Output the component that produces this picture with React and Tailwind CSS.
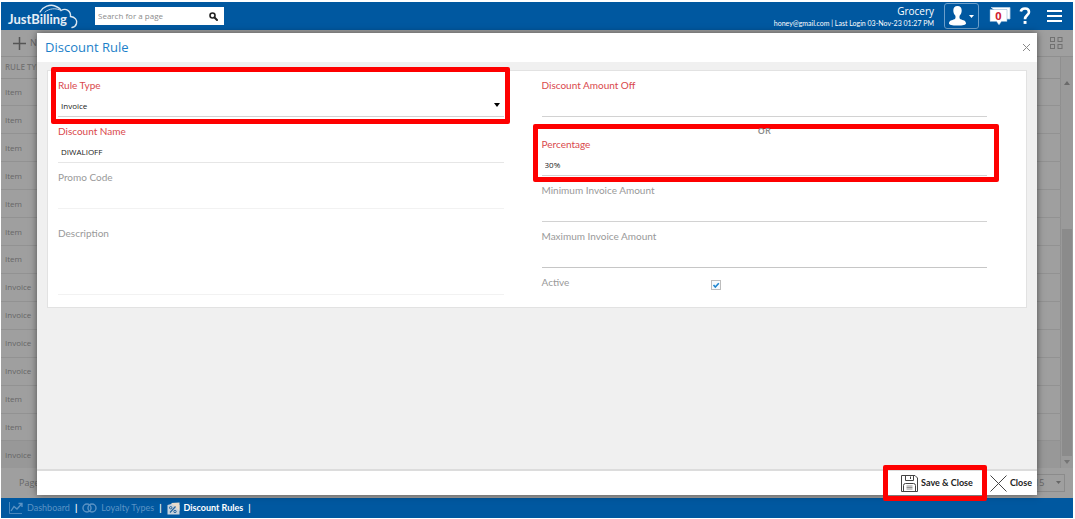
import React, { useState } from "react";

const ruleRows = [
  "Item", "Item", "Item", "Item", "Item", "Item", "Item",
  "Invoice", "Invoice", "Invoice", "Invoice",
  "Item", "Item", "Invoice",
];

function Logo() {
  return (
    <a href="#home" aria-label="JustBilling" className="block shrink-0">
      <svg width="72" height="26" viewBox="0 0 72 26" fill="none">
        <path
          d="M33 9C36 3.500 43 1 48 3C51 4 53 5.500 54 7.500C59 4.500 64 8 63.500 13.500C68 14 70.500 17 69.500 20.500C69 22.500 67.500 24 65 24.500"
          stroke="#dce8f2"
          strokeWidth="1.400"
          strokeLinecap="round"
        />
        <path d="M38 9C42 5.500 49 4.500 54 7.500" stroke="#b9d0e5" strokeWidth="1" strokeLinecap="round" />
        <text x="1" y="21" fill="#e6eef6" fontSize="13" fontWeight="700" fontFamily="Lato, sans-serif">
          JustBilling
        </text>
      </svg>
    </a>
  );
}

function SearchIcon() {
  return (
    <svg width="9" height="9" viewBox="0 0 9 9" fill="none" stroke="#222">
      <circle cx="3.500" cy="3.500" r="2.500" strokeWidth="1.600" />
      <path d="M5.500 5.500L8 8" strokeWidth="2" strokeLinecap="round" />
    </svg>
  );
}

function TopBar() {
  return (
    <header className="flex h-7 shrink-0 items-center bg-[#0058a0] pr-[11px] pl-1.5 text-white">
      <Logo />
      <form className="ml-4 flex h-[18px] w-[129px] items-center bg-white pr-1.5 pl-[3px]">
        <input
          type="text"
          aria-label="Search for a page"
          placeholder="Search for a page"
          className="w-full min-w-0 text-[8px] text-gray-700 outline-none placeholder:text-[#8c8c8c]"
        />
        <button type="button" aria-label="Search">
          <SearchIcon />
        </button>
      </form>

      <div className="ml-auto text-right">
        <div className="text-[10px] leading-[14px]">Grocery</div>
        <div className="font-['Lato',sans-serif] text-[7px] leading-[10px] whitespace-nowrap">
          honey@gmail.com | Last Login 03-Nov-23 01:27 PM
        </div>
      </div>

      <button
        type="button"
        aria-label="Account"
        className="ml-2.5 flex h-[26px] w-[35px] items-center justify-between rounded-[3px] border border-[#6b9fcb] px-1"
      >
        <svg width="17" height="20" viewBox="0 0 17 20" fill="#fff">
          <path d="M8.500 0C11.300 0 12.800 2 12.700 4.800C12.600 7 11.700 8.800 10.600 9.800C10.300 11.500 10.500 12.700 11.500 13.300C14 14.200 17 14.600 17 17.500C17 18.800 14 19.600 8.500 19.600C3 19.600 0 18.800 0 17.500C0 14.600 3 14.200 5.500 13.300C6.500 12.700 6.700 11.500 6.400 9.800C5.300 8.800 4.400 7 4.300 4.800C4.200 2 5.700 0 8.500 0Z" />
        </svg>
        <svg width="5" height="3" viewBox="0 0 5 3" fill="#fff">
          <path d="M0 0H5L2.500 3Z" />
        </svg>
      </button>

      <button type="button" aria-label="Notifications" className="ml-2.5">
        <svg width="22" height="20" viewBox="0 0 22 20">
          <path d="M2 1.500H21V13H17" fill="#fff" stroke="#b9d0e5" strokeWidth="0.800" />
          <path d="M1 3.500H18V15.500H12.500L10 19L7.500 15.500H1Z" fill="#fff" stroke="#7fa9cf" strokeWidth="0.500" />
          <text
            x="9.500"
            y="13.500"
            textAnchor="middle"
            fontSize="11"
            fontWeight="700"
            fill="#d02030"
            fontFamily="Open Sans, sans-serif"
          >
            0
          </text>
        </svg>
      </button>

      <button type="button" aria-label="Help" className="ml-2">
        <svg width="12" height="18" viewBox="0 0 12 18" fill="none">
          <path
            d="M1.800 4.500C2.200 2.500 3.800 1.500 6 1.500C8.500 1.500 10 2.900 10 4.900C10 8 6 8 6 12.200"
            stroke="#fff"
            strokeWidth="2.600"
          />
          <rect x="4.600" y="14" width="2.900" height="2.900" fill="#fff" />
        </svg>
      </button>

      <button type="button" aria-label="Menu" className="ml-4">
        <svg width="15" height="12" viewBox="0 0 15 12" fill="#fff">
          <rect width="15" height="2" />
          <rect y="5" width="15" height="2" />
          <rect y="10" width="15" height="2" />
        </svg>
      </button>
    </header>
  );
}

function RuleList() {
  return (
    <div className="flex min-h-0 flex-1 flex-col text-[#666]">
      <div className="flex h-[27px] shrink-0 items-center justify-between border-b border-[#8f8f8f] pr-2.5 pl-3">
        <button type="button" className="flex items-center gap-1 text-[9px]">
          <svg width="13" height="13" viewBox="0 0 13 13" stroke="#555" strokeWidth="1.500">
            <path d="M6.500 0V13M0 6.500H13" />
          </svg>
          New
        </button>
        <button type="button" aria-label="Grid view">
          <svg width="13" height="13" viewBox="0 0 13 13" fill="none" stroke="#717171">
            <rect x="0.500" y="0.500" width="4" height="4" />
            <rect x="8" y="0.500" width="4" height="4" />
            <rect x="0.500" y="7.500" width="4" height="4" />
            <rect x="8" y="7.500" width="4" height="4" />
          </svg>
        </button>
      </div>

      <div className="flex min-h-0 flex-1">
        <table className="h-full flex-1 border-r border-[#8f8f8f] text-left text-[8px]">
          <thead>
            <tr className="h-[21px] border-b border-[#8f8f8f] text-[#747474]">
              <th className="pl-1 font-semibold">RULE TYPE</th>
            </tr>
          </thead>
          <tbody>
            {ruleRows.map((type, idx) => (
              <tr key={idx} className="border-b border-[#929292] last:border-0 last:bg-[#989898]">
                <td className="py-0 pl-1">{type}</td>
              </tr>
            ))}
          </tbody>
        </table>
        <div className="flex w-3 flex-col items-center bg-[#9a9a9a] pt-6">
          <svg width="6" height="4" viewBox="0 0 6 4" fill="#6a6a6a">
            <path d="M3 0L6 4H0Z" />
          </svg>
          <div className="mt-36 mb-1 w-2.5 flex-1 bg-[#8b8b8b]" />
          <svg width="6" height="4" viewBox="0 0 6 4" fill="#757575" className="mb-1">
            <path d="M0 0H6L3 4Z" />
          </svg>
        </div>
      </div>

      <div className="flex h-[30px] shrink-0 items-center justify-between pr-2 pl-[18px] text-[9px]">
        <span>Page 1</span>
        <div className="relative">
          <select
            aria-label="Rows per page"
            defaultValue="15"
            className="h-[18px] w-[38px] appearance-none border border-[#8b8b8b] pl-1.5"
          >
            <option>15</option>
            <option>30</option>
          </select>
          <svg
            width="5"
            height="3"
            viewBox="0 0 5 3"
            fill="#666"
            className="pointer-events-none absolute top-[7px] right-1"
          >
            <path d="M0 0H5L2.500 3Z" />
          </svg>
        </div>
      </div>
    </div>
  );
}

function Label({ id, color = "text-[#999]", children }) {
  return (
    <label htmlFor={id} className={`block h-6 pt-1 font-['Lato',sans-serif] text-[10px] leading-5 ${color}`}>
      {children}
    </label>
  );
}

function TextField({ id, label, color, value = "", line = "border-[#d2d2d2]" }) {
  const [text, setText] = useState(value);
  return (
    <>
      <Label id={id} color={color}>{label}</Label>
      <input
        id={id}
        type="text"
        value={text}
        onChange={(e) => setText(e.target.value)}
        className={`block h-[22px] w-full border-b px-[3px] text-[8px] text-[#222] outline-none ${line}`}
      />
    </>
  );
}

function DiscountForm() {
  const [active, setActive] = useState(true);

  return (
    <form className="mx-2.5 mt-2 grid grid-cols-2 gap-x-[38px] border border-[#e2e2e2] bg-white pr-[39px] pb-3 pl-2.5">
      <div>
        <div className="relative">
          <Label id="ruleType" color="text-[#d9484c]">Rule Type</Label>
          <select
            id="ruleType"
            defaultValue="Invoice"
            className="block h-[22px] w-full appearance-none border-b border-[#d2d2d2] px-[3px] text-[8px] text-[#222] outline-none"
          >
            <option>Invoice</option>
            <option>Item</option>
          </select>
          <svg
            width="6"
            height="4"
            viewBox="0 0 6 4"
            className="pointer-events-none absolute right-1 bottom-2.5"
          >
            <path d="M0 0H6L3 4Z" />
          </svg>
          <div className="pointer-events-none absolute -top-1 -right-1.5 -bottom-[7px] -left-[7px] rounded-xs border-[5px] border-[#fe0000]" />
        </div>
        <TextField
          id="discountName"
          label="Discount Name"
          color="text-[#d9484c]"
          value="DIWALIOFF"
          line="border-[#e6e6e6]"
        />
        <TextField id="promoCode" label="Promo Code" line="border-[#f2f2f2]" />
        <div className="pt-2.5">
          <Label id="description">Description</Label>
          <textarea
            id="description"
            className="block h-[52px] w-full resize-none border-b border-[#f2f2f2] px-[3px] text-[8px] outline-none"
          />
        </div>
      </div>

      <div>
        <TextField id="amountOff" label="Discount Amount Off" color="text-[#d9484c]" />
        <div className="relative z-10 h-[13px] text-center text-[9px] leading-7 font-semibold text-[#8a8a8a]">
          OR
        </div>
        <div className="relative">
          <TextField id="percentage" label="Percentage" color="text-[#d9484c]" value="30%" />
          <div className="pointer-events-none absolute -top-1.5 -right-3 -bottom-1.5 -left-[9px] rounded-xs border-[5px] border-[#fe0000]" />
        </div>
        <TextField id="minAmount" label="Minimum Invoice Amount" />
        <TextField id="maxAmount" label="Maximum Invoice Amount" line="border-[#c6c6c6]" />
        <div className="grid grid-cols-[38%_1fr]">
          <Label id="active">Active</Label>
          <div className="relative mt-3 size-2.5">
            <input
              id="active"
              type="checkbox"
              checked={active}
              onChange={(e) => setActive(e.target.checked)}
              className="block size-2.5 appearance-none border border-[#bdbdbd] bg-[#f6fafd]"
            />
            {active && (
              <svg
                viewBox="0 0 10 10"
                fill="none"
                stroke="#1f86d0"
                strokeWidth="1.600"
                className="pointer-events-none absolute inset-0"
              >
                <path d="M2.500 5L4.300 7L7.800 3.200" />
              </svg>
            )}
          </div>
        </div>
      </div>
    </form>
  );
}

function DiscountDialog() {
  return (
    <div
      role="dialog"
      aria-labelledby="dialogTitle"
      className="absolute inset-x-9 top-[3px] bottom-[3px] flex flex-col bg-[#f0f0f0] shadow-[0_0_7px_rgba(0,0,0,0.5)]"
    >
      <div className="flex h-[29px] shrink-0 items-center justify-between bg-white pr-[7px] pl-2">
        <h2 id="dialogTitle" className="text-[13px] text-[#1c7fc9]">Discount Rule</h2>
        <button type="button" aria-label="Close dialog">
          <svg width="7" height="7" viewBox="0 0 7 7" stroke="#8a8a8a">
            <path d="M0 0L7 7M7 0L0 7" />
          </svg>
        </button>
      </div>

      <div className="min-h-0 flex-1">
        <DiscountForm />
      </div>

      <div className="flex h-[26px] shrink-0 items-center justify-end gap-[17px] border-t-2 border-[#dcdcdc] bg-white pr-[5px] font-['Lato',sans-serif] text-[9px] font-bold text-[#222]">
        <button type="button" className="relative flex items-center gap-[3px]">
          <svg width="17" height="17" viewBox="0 0 17 17" fill="none" stroke="#444">
            <path d="M0.500 0.500H14L16.500 3V16.500H0.500Z" />
            <path d="M4.500 0.500V5.500H12.500V0.500M9.500 1.500V4" />
            <path d="M2.500 16.500V10.500Q2.500 8.500 4.500 8.500H12.500Q14.500 8.500 14.500 10.500V16.500" />
            <path d="M5.500 11H11.500M5.500 12.500H11.500M5.500 14H11.500" stroke="#777" strokeWidth="0.800" />
          </svg>
          Save &amp; Close
          <span className="pointer-events-none absolute -top-2.5 -right-3.5 -bottom-[9px] -left-[18px] rounded-xs border-[5px] border-[#fe0000]" />
        </button>
        <button type="button" className="flex items-center gap-[3px]">
          <svg width="17" height="17" viewBox="0 0 17 17" stroke="#444">
            <path d="M0.500 0.500L16.500 16.500M16.500 0.500L0.500 16.500" />
          </svg>
          Close
        </button>
      </div>
    </div>
  );
}

function TaskBar() {
  return (
    <nav className="flex h-5 shrink-0 items-center bg-[#0058a0] pl-2 font-['Lato',sans-serif] text-[9px] text-[#5b93c4]">
      <a href="#dashboard" className="flex items-center gap-1">
        <svg width="14" height="12" viewBox="0 0 14 12" fill="none" stroke="#5b93c4">
          <path d="M0.500 0V11.500H13" strokeWidth="0.800" />
          <path d="M2 9L5 4.500L8 7L12.500 2M9.500 1.500H13V5" strokeWidth="1.300" />
        </svg>
        Dashboard
      </a>
      <span className="mx-[5px] font-bold text-white">|</span>
      <a href="#loyalty" className="flex items-center gap-1">
        <svg width="15" height="10" viewBox="0 0 15 10" fill="none" stroke="#5b93c4" strokeWidth="1.400">
          <circle cx="5" cy="5" r="4" />
          <circle cx="10" cy="5" r="4" />
        </svg>
        Loyalty Types
      </a>
      <span className="mx-[5px] font-bold text-white">|</span>
      <a href="#rules" className="flex items-center gap-1 font-bold text-white">
        <svg width="13" height="13" viewBox="0 0 13 13">
          <path d="M0.500 3L8 1L12.500 3V12.500H0.500Z" fill="#c9d3dc" />
          <path d="M4 1L12.500 0.500V9" fill="#e9dccb" />
          <path d="M3 10.500L8.500 4.500" stroke="#23639c" strokeWidth="1.200" />
          <circle cx="3.700" cy="5.700" r="1.200" fill="none" stroke="#23639c" />
          <circle cx="8" cy="9.500" r="1.200" fill="none" stroke="#23639c" />
        </svg>
        Discount Rules
      </a>
      <span className="mx-[5px] font-bold text-white">|</span>
    </nav>
  );
}

export default function App() {
  return (
    <div className="flex h-screen min-h-[400px] flex-col bg-white pt-0.5 pr-0.5 pb-px pl-px font-['Open_Sans','Noto_Sans',sans-serif]">
      <TopBar />
      <main className="relative flex min-h-0 flex-1 flex-col bg-[#9f9f9f]">
        <RuleList />
        <DiscountDialog />
      </main>
      <TaskBar />
    </div>
  );
}
